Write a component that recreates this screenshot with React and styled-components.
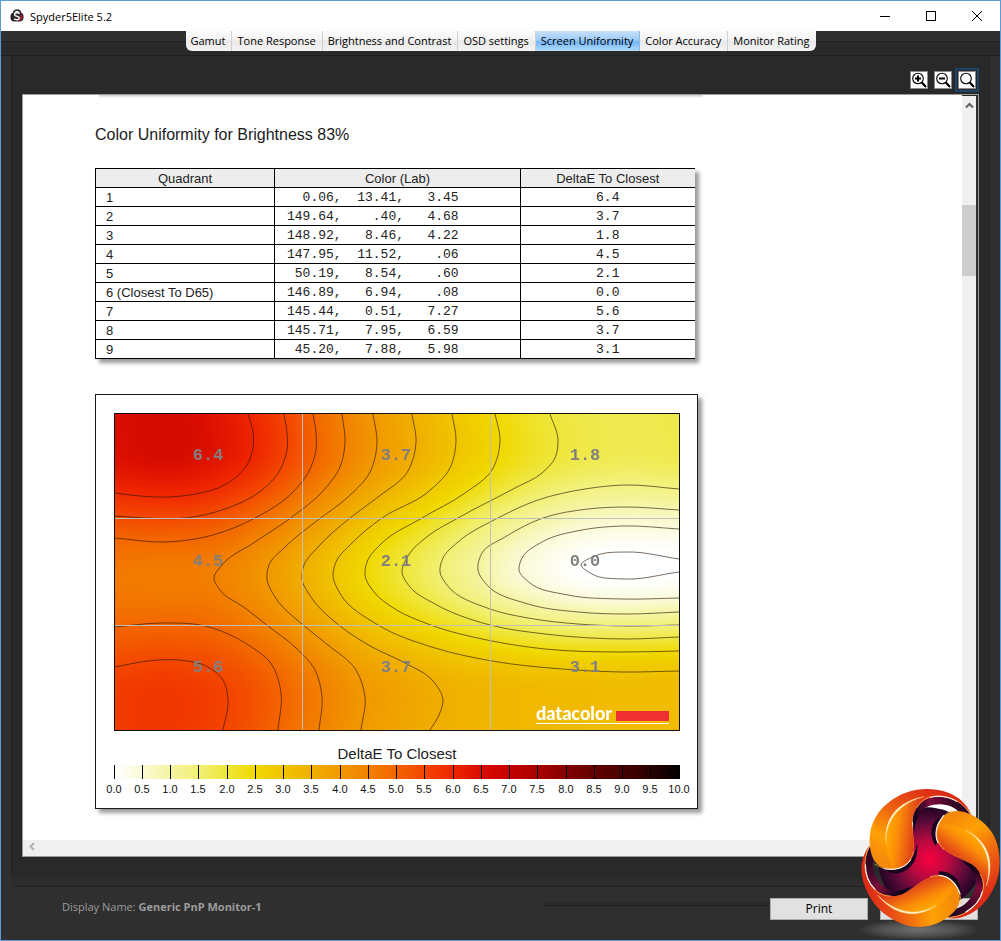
import React, { Component, createRef } from "react";
import styled, { createGlobalStyle, css } from "styled-components";

const GlobalStyle = createGlobalStyle`
  * {
    box-sizing: border-box;
  }
  body {
    margin: 0;
    background: #2e2e2e;
    font-family: "Open Sans", "Noto Sans", sans-serif;
    font-size: 11px;
    color: #000;
  }
  button {
    font: inherit;
    color: inherit;
    padding: 0;
    margin: 0;
    border: none;
    background: none;
  }
`;

const Window = styled.div`
  position: relative;
  display: flex;
  flex-direction: column;
  min-height: 100vh;
  border: 1px solid #5b9bd8;
  background: #2f2f2f;
`;

const TitleBar = styled.header`
  display: flex;
  align-items: center;
  height: 30px;
  padding-left: 9px;
  background: #fff;
`;

const AppTitle = styled.h1`
  flex: 1;
  margin: 0 0 0 6px;
  font-size: 11px;
  font-weight: normal;
`;

const CaptionButton = styled.button`
  display: flex;
  align-items: center;
  justify-content: center;
  width: 46px;
  height: 30px;
`;

const TabStrip = styled.nav`
  display: flex;
  justify-content: center;
  height: 25px;
  border-bottom: 1px solid #1f1f1f;
  background: linear-gradient(#303030 10px, #212121 10px, #2a2a2a 12px);
`;

const TabList = styled.div`
  display: flex;
  height: 20px;
  border-radius: 0 0 6px 6px;
  overflow: hidden;
`;

const Tab = styled.button`
  padding: 0 6px 0 5px;
  font-size: 11px;
  line-height: 20px;
  white-space: nowrap;
  border-right: 1px solid #d0d0d0;
  background: linear-gradient(#fbfbfb, #f3f3f3 45%, #e9e9e9 50%, #f4f4f4);
  &:last-child {
    border-right: none;
  }
  ${props =>
    props.$active &&
    css`
      border-right-color: #8db9e4;
      background: linear-gradient(#c8e0fa, #9dcbf8 45%, #74b5f6 55%, #b4dcff);
    `}
`;

const Body = styled.main`
  flex: 1;
  display: flex;
  flex-direction: column;
  margin: 0 10px;
  padding: 14px 10px 21px;
  border: solid #232323;
  border-width: 0 1px;
  background: #292929;
`;

const Toolbar = styled.div`
  display: flex;
  justify-content: flex-end;
  gap: 6px;
  padding: 0 3px 4px 0;
`;

const ToolButton = styled.button`
  display: flex;
  width: 18px;
  height: 18px;
  margin: 1px 0;
  border: 1px solid #8b8b8b;
  background: #fff;
  ${props =>
    props.$focused &&
    css`
      outline: 2px solid #1d4466;
      outline-offset: 1px;
    `}
`;

const Viewer = styled.section`
  flex: 1;
  display: grid;
  grid-template-columns: 1fr 16px;
  grid-template-rows: 1fr 16px;
  border: 1px solid #9a9a9a;
  background: #fff;
`;

const Page = styled.article`
  padding: 0 0 30px 72px;
  overflow: hidden;
`;

const PreviousEdge = styled.div`
  width: 604px;
  height: 3px;
  margin-left: 4px;
  background: linear-gradient(#cdcdcd, #fff);
`;

const Heading = styled.h2`
  margin: 25px 0 21px;
  font: 16px/24px "Liberation Sans", Arial, sans-serif;
  color: #1b1b1b;
`;

const Table = styled.table`
  width: 599px;
  table-layout: fixed;
  border-collapse: collapse;
  border: solid #000;
  border-width: 1px 0 1px 1px;
  box-shadow: 4px 4px 4px rgba(0, 0, 0, 0.4);
  font: 13px/16px "Liberation Sans", Arial, sans-serif;
  color: #222;
  background: #fff;
`;

const HeadCell = styled.th`
  width: ${props => props.$width};
  height: 19px;
  padding: 2px 0 0;
  font-weight: normal;
  border: 1px solid #000;
  border-right: none;
  background: #ededed;
`;

const Cell = styled.td`
  height: 19px;
  padding: 2px 0 0 10px;
  border: 1px solid #000;
  border-right: none;
  ${props =>
    props.$mono &&
    css`
      padding-left: 12px;
      font-family: "Liberation Mono", "Courier New", monospace;
      white-space: pre;
    `}
  ${props =>
    props.$center &&
    css`
      padding-left: 0;
      text-align: center;
    `}
`;

const ChartCard = styled.figure`
  width: 603px;
  margin: 35px 0 0;
  padding: 18px 17px 9px 18px;
  border: 1px solid #1a1a1a;
  box-shadow: 4px 4px 4px rgba(0, 0, 0, 0.4);
  background: #fff;
`;

const Plot = styled.div`
  position: relative;
  height: 318px;
  border: 1px solid #111;
`;

const HeatCanvas = styled.canvas`
  display: block;
  width: 100%;
  height: 100%;
`;

const Overlay = styled.svg`
  position: absolute;
  left: 0;
  top: 0;
  width: 100%;
  height: 100%;
`;

const Legend = styled.svg`
  display: block;
  width: 100%;
  height: 68px;
  overflow: visible;
  font-family: "Liberation Sans", Arial, sans-serif;
`;

const VerticalBar = styled.div`
  display: flex;
  flex-direction: column;
  align-items: center;
  padding-top: 5px;
  border-top: 1px solid #2a2a2a;
  border-right: 2px solid #2f2f2f;
  background: #f0f0f0;
`;

const Thumb = styled.div`
  width: 100%;
  height: 71px;
  margin-top: 95px;
  background: #cdcdcd;
`;

const HorizontalBar = styled.div`
  grid-column: 1 / -1;
  display: flex;
  align-items: center;
  padding: 0 0 3px 5px;
  background: #f0f0f0;
`;

const Footer = styled.footer`
  display: flex;
  align-items: flex-start;
  height: 62px;
  margin: 0 11px;
  padding: 12px 11px 0 50px;
  border-top: 8px solid #2c2c2c;
  box-shadow: inset 0 1px 0 #1f1f1f;
`;

const DisplayName = styled.p`
  flex: 1;
  margin: 0;
  line-height: 18px;
  color: #9c9c9c;
`;

const Groove = styled.div`
  width: 225px;
  height: 4px;
  margin-top: 4px;
  border-bottom: 1px solid #202020;
  background: #2a2a2a;
`;

const PushButton = styled.button`
  width: 98px;
  height: 22px;
  margin-left: ${props => props.$gap};
  border: 1px solid #adadad;
  background: #e1e1e1;
  font-size: 12px;
  line-height: 20px;
`;

const Badge = styled.svg`
  position: absolute;
  right: -1px;
  bottom: -1px;
  width: 161px;
  height: 161px;
  pointer-events: none;
`;

const TABS = [
  "Gamut",
  "Tone Response",
  "Brightness and Contrast",
  "OSD settings",
  "Screen Uniformity",
  "Color Accuracy",
  "Monitor Rating"
];

const ROWS = [
  ["1", "  0.06,  13.41,   3.45", "6.4"],
  ["2", "149.64,    .40,   4.68", "3.7"],
  ["3", "148.92,   8.46,   4.22", "1.8"],
  ["4", "147.95,  11.52,    .06", "4.5"],
  ["5", " 50.19,   8.54,    .60", "2.1"],
  ["6 (Closest To D65)", "146.89,   6.94,    .08", "0.0"],
  ["7", "145.44,   0.51,   7.27", "5.6"],
  ["8", "145.71,   7.95,   6.59", "3.7"],
  ["9", " 45.20,   7.88,   5.98", "3.1"]
];

// one entry per half DeltaE, 0.0 to 10.0
const SCALE = [
  [255, 255, 255],
  [250, 250, 214],
  [245, 244, 160],
  [241, 240, 116],
  [239, 230, 58],
  [240, 216, 0],
  [240, 196, 0],
  [240, 174, 0],
  [241, 152, 0],
  [242, 128, 0],
  [243, 100, 0],
  [243, 68, 0],
  [238, 36, 0],
  [216, 12, 0],
  [196, 0, 0],
  [168, 0, 0],
  [130, 0, 0],
  [98, 0, 0],
  [70, 0, 0],
  [40, 0, 0],
  [0, 0, 0]
];

// DeltaE along the middle of each row of quadrants: [x, value]
const TOP = [[114, 6.45], [168, 6.6], [208, 6.42], [253, 6], [287, 5.5], [316, 5], [345, 4.5], [377, 4], [415, 3.5], [456, 3], [500, 2.5], [558, 2], [620, 1.8], [680, 1.84]];
const MIDDLE = [[114, 4.6], [165, 4.57], [214, 4.5], [266, 4], [302, 3.5], [333, 3], [365, 2.5], [402, 2], [440, 1.5], [478, 1], [518, 0.5], [580, 0], [630, -0.1], [680, -0.05]];
const BOTTOM = [[114, 5.65], [168, 5.72], [228, 5.5], [281, 5], [322, 4.5], [365, 4], [443, 3.5], [500, 3.32], [585, 3.22], [680, 3.2]];

const CONTOURS = [
  [[115, 493], [140, 496], [168, 497], [195, 494], [218, 488], [235, 478], [247, 465], [253, 448], [253, 432], [248, 414]],
  [[115, 516], [145, 518], [185, 518], [225, 509], [258, 493], [280, 470], [287, 450], [287, 433], [284, 414]],
  [[115, 538], [165, 542], [205, 537], [255, 518], [292, 493], [308, 473], [316, 450], [316, 433], [313, 414]],
  [[342, 414], [345, 443], [340, 467], [322, 492], [292, 517], [255, 542], [222, 565], [214, 578], [220, 590], [245, 608], [268, 626], [295, 647], [315, 670], [322, 697], [319, 730]],
  [[373, 414], [377, 443], [370, 472], [348, 497], [318, 520], [285, 547], [269, 565], [267, 579], [275, 597], [303, 625], [328, 645], [356, 670], [365, 697], [361, 730]],
  [[412, 414], [416, 443], [408, 471], [378, 497], [350, 518], [318, 547], [304, 565], [302, 579], [311, 597], [340, 626], [372, 647], [405, 663], [433, 681], [443, 700], [439, 715], [430, 730]],
  [[452, 414], [456, 440], [450, 468], [428, 492], [382, 518], [352, 543], [336, 562], [333, 575], [341, 595], [378, 625], [435, 648], [492, 661], [562, 669], [622, 672], [679, 671]],
  [[495, 414], [500, 440], [492, 470], [465, 493], [422, 518], [382, 543], [367, 562], [365, 575], [374, 592], [395, 609], [428, 624], [492, 641], [545, 649], [622, 652], [679, 651]],
  [[550, 414], [558, 440], [555, 458], [542, 473], [515, 488], [458, 518], [428, 536], [408, 556], [402, 572], [410, 587], [435, 604], [490, 625], [545, 634], [628, 639], [679, 637]],
  [[679, 489], [625, 485], [585, 489], [538, 500], [498, 518], [458, 542], [443, 558], [440, 572], [447, 585], [490, 609], [528, 618], [578, 624], [628, 626], [679, 625]],
  [[679, 510], [625, 507], [588, 509], [543, 518], [505, 537], [482, 553], [478, 570], [487, 585], [528, 604], [578, 612], [628, 614], [679, 612]],
  [[679, 529], [622, 526], [582, 530], [542, 542], [522, 558], [519, 570], [530, 583], [568, 595], [622, 599], [679, 598]],
  [[679, 559], [628, 552], [595, 556], [581, 565], [592, 574], [625, 579], [679, 572]],
  [[115, 667], [148, 661], [178, 660], [208, 667], [223, 680], [228, 700], [223, 730]],
  [[115, 627], [162, 623], [205, 626], [245, 643], [272, 665], [281, 693], [278, 730]]
];

const LABELS = [
  [208, 460, "6.4"],
  [396, 460, "3.7"],
  [585, 460, "1.8"],
  [208, 566, "4.5"],
  [396, 566, "2.1"],
  [585, 566, "0.0"],
  [208, 672, "5.6"],
  [396, 672, "3.7"],
  [585, 672, "3.1"]
];

function sampleCurve(points, x) {
  const last = points.length - 1;
  let i = 0;
  while (i < last - 1 && x > points[i + 1][0]) i++;
  const slope = k => {
    const a = points[Math.max(k - 1, 0)];
    const b = points[Math.min(k + 1, last)];
    return (b[1] - a[1]) / (b[0] - a[0]);
  };
  const [x0, y0] = points[i];
  const [x1, y1] = points[i + 1];
  const h = x1 - x0;
  const t = (x - x0) / h;
  const t2 = t * t;
  const t3 = t2 * t;
  return (
    (2 * t3 - 3 * t2 + 1) * y0 +
    (t3 - 2 * t2 + t) * h * slope(i) +
    (3 * t2 - 2 * t3) * y1 +
    (t3 - t2) * h * slope(i + 1)
  );
}

function smooth(t) {
  const c = Math.min(1, Math.max(0, t));
  return c * c * (3 - 2 * c);
}

function scaleColor(value) {
  const pos = Math.min(19.999, Math.max(0, value * 2));
  const i = Math.floor(pos);
  return SCALE[i].map((c, k) => c + (SCALE[i + 1][k] - c) * (pos - i));
}

// tangents are weighted by segment length so uneven points stay smooth
function smoothPath(points) {
  const last = points.length - 1;
  const length = i => Math.hypot(points[i + 1][0] - points[i][0], points[i + 1][1] - points[i][1]);
  const unit = (i, k) => (points[i + 1][k] - points[i][k]) / length(i);
  const tangent = (i, k) => {
    if (i === 0) return unit(0, k);
    if (i === last) return unit(last - 1, k);
    const before = length(i - 1);
    const after = length(i);
    return (unit(i - 1, k) * after + unit(i, k) * before) / (before + after);
  };
  let d = `M${points[0].join(",")}`;
  for (let i = 0; i < last; i++) {
    const h = length(i) / 3;
    const [a, b] = [points[i], points[i + 1]];
    d += `C${a[0] + tangent(i, 0) * h},${a[1] + tangent(i, 1) * h}`;
    d += ` ${b[0] - tangent(i + 1, 0) * h},${b[1] - tangent(i + 1, 1) * h}`;
    d += ` ${b[0]},${b[1]}`;
  }
  return d;
}

class HeatMap extends Component {
  constructor(props) {
    super(props);
    this.canvas = createRef();
  }

  componentDidMount() {
    const canvas = this.canvas.current;
    const ctx = canvas.getContext("2d");
    const image = ctx.createImageData(canvas.width, canvas.height);
    for (let px = 0; px < canvas.width; px++) {
      const x = px + 115;
      const side = px / canvas.width;
      const topY = 443 + side * 6;
      const middleY = 578 - side * 12;
      const bottomY = 700 - side * 10;
      const middle = sampleCurve(MIDDLE, x);
      for (let py = 0; py < canvas.height; py++) {
        const y = py + 414;
        // the outer rows lean back towards the plot's edges
        const lean = Math.max(0, topY - y, y - bottomY) / 30;
        const drift = x + 5 * lean * lean;
        let value;
        if (y < middleY) {
          const top = sampleCurve(TOP, Math.min(680, drift));
          value = top + (middle - top) * smooth((y - topY) / (middleY - topY));
        } else {
          const bottom = sampleCurve(BOTTOM, Math.min(680, drift));
          value = middle + (bottom - middle) * smooth((y - middleY) / (bottomY - middleY));
        }
        const [r, g, b] = scaleColor(value);
        const o = (py * canvas.width + px) * 4;
        image.data[o] = r;
        image.data[o + 1] = g;
        image.data[o + 2] = b;
        image.data[o + 3] = 255;
      }
    }
    ctx.putImageData(image, 0, 0);
  }

  render() {
    return (
      <Plot>
        <HeatCanvas ref={this.canvas} width={564} height={316} />
        <Overlay viewBox="115 414 564 316">
          <g fill="none" stroke="#281400" strokeOpacity="0.62" strokeWidth="1">
            {CONTOURS.map((points, i) => (
              <path key={i} d={smoothPath(points)} />
            ))}
          </g>
          <path
            d="M302.5 414V730M490.5 414V730M115 518.5H679M115 625.5H679"
            stroke="#c0c0b8"
          />
          <g
            fill="#808080"
            fontFamily="Liberation Mono, monospace"
            fontWeight="bold"
            fontSize="17"
            textAnchor="middle"
          >
            {LABELS.map(([x, y, text], i) => (
              <text key={i} x={x} y={y}>
                {text}
              </text>
            ))}
          </g>
          <text x="536" y="720" fill="#fff" fontFamily="Lato, sans-serif" fontWeight="900" fontSize="18">
            datacolor
          </text>
          <rect x="616" y="711" width="53" height="10" fill="#ee3030" />
          <path d="M536 723.5H669" stroke="#fff" />
        </Overlay>
      </Plot>
    );
  }
}

const ScaleLegend = () => (
  <Legend viewBox="114 731 566 68">
    <defs>
      <linearGradient id="deltaScale">
        {SCALE.map((c, i) => (
          <stop key={i} offset={i / 20} stopColor={`rgb(${c.join(",")})`} />
        ))}
      </linearGradient>
    </defs>
    <text x="397" y="759" fontSize="15" textAnchor="middle" fill="#222">
      DeltaE To Closest
    </text>
    <rect x="114" y="765" width="566" height="14" fill="url(#deltaScale)" />
    {SCALE.map((c, i) => (
      <g key={i}>
        <rect x={Math.floor(114 + i * 28.25)} y="765" width="1" height="14" />
        <text x={Math.floor(114 + i * 28.25)} y="793" fontSize="11" textAnchor="middle" fill="#111">
          {(i / 2).toFixed(1)}
        </text>
      </g>
    ))}
  </Legend>
);

const ZoomIcon = ({ sign }) => (
  <svg width="16" height="16" viewBox="0 0 16 16" fill="none" stroke="#000">
    <circle cx="7" cy="6.5" r="5.3" strokeWidth="1.1" />
    <path d="M10.8 10.5L15 15" strokeWidth="2.2" />
    {sign !== "fit" && <path d="M4 6.5H10" strokeWidth="2" />}
    {sign === "in" && <path d="M7 3.5V9.5" strokeWidth="2" />}
  </svg>
);

const AppIcon = () => (
  <svg width="14" height="14" viewBox="0 0 14 14">
    <path d="M3.5 4.5C3.5 0 10.5 0 10.5 4.5" fill="none" stroke="#333" strokeWidth="1.6" />
    <rect x="0.5" y="3.5" width="13" height="9" rx="4" fill="#2a2224" />
    <path d="M10 5C14 6 13 12 8 12.5C11 10 11 8 10 5Z" fill="#c01830" />
    <path
      d="M9.6 4.6C7.5 3 4.2 3.8 4.6 5.8C5 7.6 9.3 7 9.3 9.2C9.3 11 5.5 11.2 4 9.8"
      fill="none"
      stroke="#f4f4f4"
      strokeWidth="1.5"
    />
  </svg>
);

const TURNS = [0, 120, 240];

const Emblem = () => (
  <Badge viewBox="0 0 483 483" aria-hidden="true">
    <defs>
      <radialGradient id="emblemShadow">
        <stop offset="0" stopColor="#707070" />
        <stop offset="0.6" stopColor="#505050" />
        <stop offset="1" stopColor="#505050" stopOpacity="0" />
      </radialGradient>
      <radialGradient id="emblemCore" gradientUnits="userSpaceOnUse" cx="268" cy="238" r="165">
        <stop offset="0" stopColor="#f8003e" />
        <stop offset="0.35" stopColor="#b80a40" />
        <stop offset="0.7" stopColor="#560a38" />
        <stop offset="1" stopColor="#14021e" />
      </radialGradient>
      <linearGradient id="emblemBand" gradientUnits="userSpaceOnUse" x1="225" y1="110" x2="395" y2="80">
        <stop offset="0" stopColor="#12021c" />
        <stop offset="0.3" stopColor="#7c0c3c" />
        <stop offset="0.65" stopColor="#3c0628" />
        <stop offset="1" stopColor="#1c0428" />
      </linearGradient>
      <linearGradient id="emblemRim" gradientUnits="userSpaceOnUse" x1="260" y1="20" x2="150" y2="250">
        <stop offset="0" stopColor="#dc2a18" />
        <stop offset="0.4" stopColor="#ee6012" />
        <stop offset="0.75" stopColor="#fea204" />
        <stop offset="1" stopColor="#f68a0a" />
      </linearGradient>
      <linearGradient id="emblemFace" gradientUnits="userSpaceOnUse" x1="145" y1="150" x2="228" y2="160">
        <stop offset="0" stopColor="#ffa600" />
        <stop offset="0.35" stopColor="#fb8c08" />
        <stop offset="1" stopColor="#de3c1a" />
      </linearGradient>
    </defs>
    <ellipse cx="235" cy="449" rx="185" ry="31" fill="url(#emblemShadow)" />
    {TURNS.map(turn => (
      <g key={turn} transform={`rotate(${turn} 268 238)`}>
        <path
          d="M210 240C226 190 206 130 232 100C240 88 250 82 262 82C300 84 326 92 345 108C330 130 322 160 325 200L268 260Z"
          fill="url(#emblemCore)"
        />
        <path
          d="M350 104C306 98 274 118 274 160C276 196 300 218 330 232C302 208 286 182 290 156C294 130 316 112 350 104Z"
          fill="#1a0320"
        />
        <path
          d="M217 120C222 80 250 50 290 48C335 46 378 68 397 118L364 105C345 75 300 64 262 80C236 92 226 120 224 156Z"
          fill="url(#emblemBand)"
        />
      </g>
    ))}
    {TURNS.map(turn => (
      <g key={turn} transform={`rotate(${turn} 268 238)`}>
        <path
          d="M90 200C84 150 102 100 145 68C190 32 240 22 290 29C344 37 382 66 397 112C374 68 330 46 290 48C250 52 222 80 217 118C214 150 226 175 220 210C214 250 186 270 152 268C112 264 94 240 90 200Z"
          fill="url(#emblemRim)"
        />
        <path
          d="M285 47C220 48 160 85 141 140C130 180 142 225 158 266C190 268 214 246 219 212C225 175 213 150 217 118C221 85 245 55 285 47Z"
          fill="url(#emblemFace)"
        />
        <path
          d="M252 50C180 68 136 120 138 188C131 118 170 64 252 50Z"
          fill="#fff3cc"
          stroke="#ffdc94"
          strokeWidth="1"
        />
        <path
          d="M396 110C374 68 330 46 290 48C262 50 242 62 230 84M104 252C146 280 210 270 221 214"
          fill="none"
          stroke="#ffc44c"
          strokeWidth="2"
        />
        <path
          d="M350 64C322 48 292 46 272 52M132 266C168 274 198 262 212 240"
          fill="none"
          stroke="#fff"
          strokeWidth="3"
          strokeLinecap="round"
        />
      </g>
    ))}
  </Badge>
);

class App extends Component {
  constructor(props) {
    super(props);
    this.state = { tab: "Screen Uniformity" };
  }

  render() {
    return (
      <Window>
        <GlobalStyle />
        <TitleBar>
          <AppIcon />
          <AppTitle>Spyder5Elite 5.2</AppTitle>
          <CaptionButton aria-label="Minimize">
            <svg width="10" height="10" stroke="#000">
              <path d="M0 5.5H10" />
            </svg>
          </CaptionButton>
          <CaptionButton aria-label="Maximize">
            <svg width="10" height="10" fill="none" stroke="#000">
              <rect x="0.5" y="0.5" width="9" height="9" />
            </svg>
          </CaptionButton>
          <CaptionButton aria-label="Close">
            <svg width="10" height="10" stroke="#000">
              <path d="M0 0L10 10M10 0L0 10" />
            </svg>
          </CaptionButton>
        </TitleBar>
        <TabStrip>
          <TabList role="tablist">
            {TABS.map(tab => (
              <Tab
                key={tab}
                role="tab"
                aria-selected={tab === this.state.tab}
                $active={tab === this.state.tab}
                onClick={() => this.setState({ tab })}
              >
                {tab}
              </Tab>
            ))}
          </TabList>
        </TabStrip>
        <Body>
          <Toolbar>
            <ToolButton aria-label="Zoom in">
              <ZoomIcon sign="in" />
            </ToolButton>
            <ToolButton aria-label="Zoom out">
              <ZoomIcon sign="out" />
            </ToolButton>
            <ToolButton aria-label="Zoom to fit" $focused>
              <ZoomIcon sign="fit" />
            </ToolButton>
          </Toolbar>
          <Viewer>
            <Page>
              <PreviousEdge />
              <Heading>Color Uniformity for Brightness 83%</Heading>
              <Table>
                <thead>
                  <tr>
                    <HeadCell $width="179px">Quadrant</HeadCell>
                    <HeadCell $width="246px">Color (Lab)</HeadCell>
                    <HeadCell $width="174px">DeltaE To Closest</HeadCell>
                  </tr>
                </thead>
                <tbody>
                  {ROWS.map(([quadrant, lab, delta]) => (
                    <tr key={quadrant}>
                      <Cell>{quadrant}</Cell>
                      <Cell $mono>{lab}</Cell>
                      <Cell $mono $center>
                        {delta}
                      </Cell>
                    </tr>
                  ))}
                </tbody>
              </Table>
              <ChartCard>
                <HeatMap />
                <ScaleLegend />
              </ChartCard>
            </Page>
            <VerticalBar>
              <svg width="9" height="9" fill="none" stroke="#606060" strokeWidth="2">
                <path d="M1 6.5L4.5 3L8 6.5" />
              </svg>
              <Thumb />
            </VerticalBar>
            <HorizontalBar>
              <svg width="9" height="9" fill="none" stroke="#b4b4b4" strokeWidth="2">
                <path d="M6 1L2.5 4.5L6 8" />
              </svg>
            </HorizontalBar>
          </Viewer>
        </Body>
        <Footer>
          <DisplayName>
            Display Name: <b>Generic PnP Monitor-1</b>
          </DisplayName>
          <Groove />
          <PushButton $gap="1px">Print</PushButton>
          <PushButton $gap="12px" aria-label="Close report" />
        </Footer>
        <Emblem />
      </Window>
    );
  }
}

export default App;
